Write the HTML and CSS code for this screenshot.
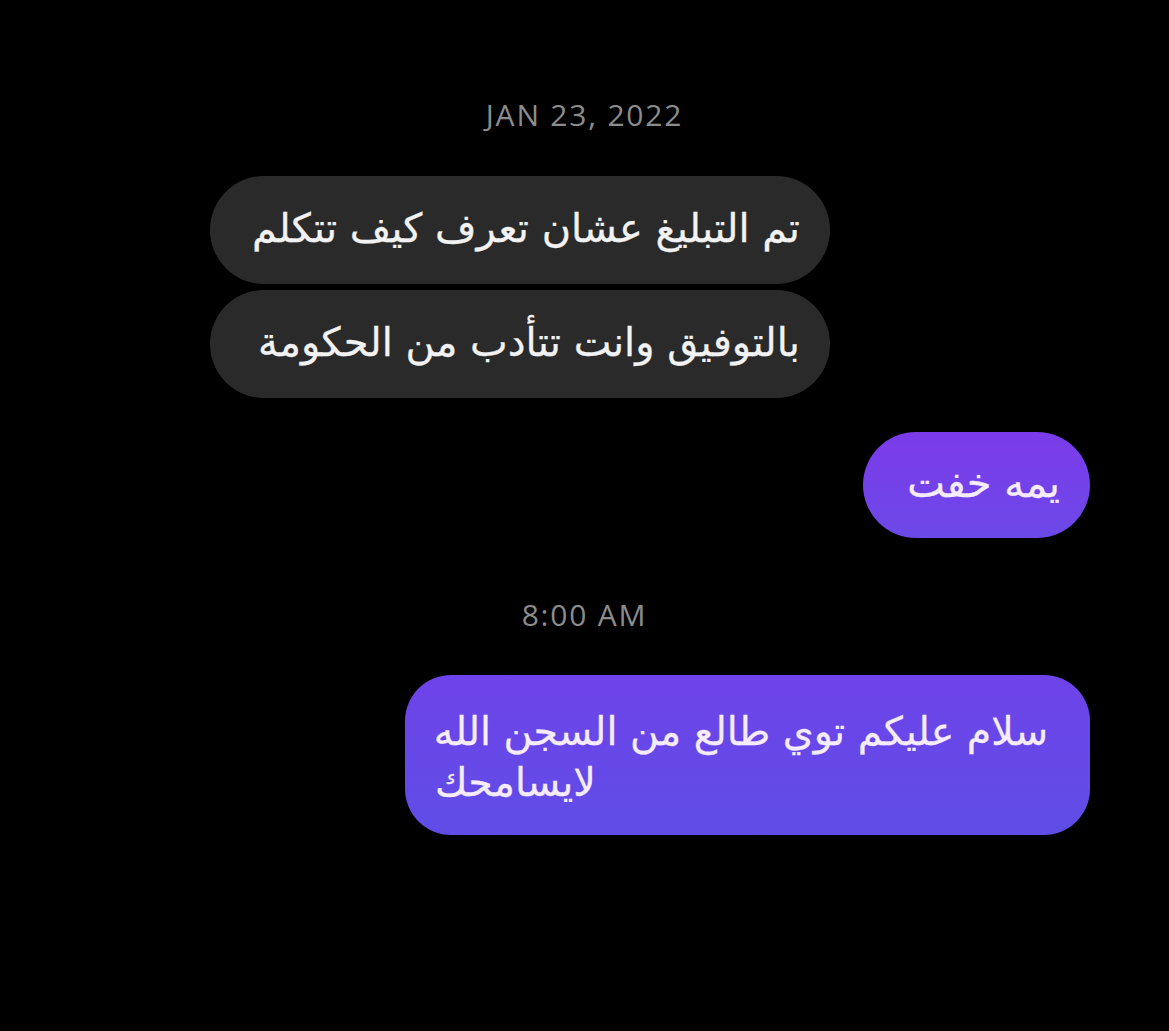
FILE: index.html
```html
<!DOCTYPE html>
<html lang="ar">
<head>
    <meta charset="UTF-8">
    <meta name="viewport" content="width=device-width, initial-scale=1.0">
    <title>Chat</title>
    <link rel="stylesheet" href="styles.css">
</head>
<body>
    <div class="chat">
        <div class="stamp date">JAN 23, 2022</div>
        <div class="msg them first" dir="rtl">تم التبليغ عشان تعرف كيف تتكلم</div>
        <div class="msg them last" dir="rtl">بالتوفيق وانت تتأدب من الحكومة</div>
        <div class="msg me short" dir="rtl">يمه خفت</div>
        <div class="stamp time">8:00 AM</div>
        <div class="msg me long" dir="rtl">سلام عليكم توي طالع من السجن الله<br>لايسامحك</div>
    </div>
</body>
</html>
```

FILE: styles.css
```css
*{
    padding: 0;
    margin: 0;
    box-sizing: border-box;
}
body{
    background-color: #000;
    width: 1169px;
    height: 1031px;
    overflow: hidden;
}
.chat{
    display: flex;
    flex-direction: column;
    padding-top: 97px;
}
.stamp{
    font-family: "Open Sans", "Liberation Sans", sans-serif;
    font-size: 30px;
    font-weight: 500;
    letter-spacing: 1.8px;
    color: #8c8c8c;
    text-align: center;
    width: 1169px;
    line-height: 36px;
}
.date{
    margin-bottom: 43px;
}
.time{
    margin-top: 59px;
    margin-bottom: 42px;
}
.msg{
    font-family: "DejaVu Sans", sans-serif;
    font-size: 40px;
    color: #f2f2f2;
    -webkit-text-stroke: 0.3px;
    border-radius: 54px;
    padding: 0 30px;
}
.them{
    background-color: #2a2a2a;
    align-self: flex-start;
    margin-left: 210px;
    width: 620px;
    height: 108px;
    line-height: 104px;
}
.them.last{
    margin-top: 6px;
}
.me{
    align-self: flex-end;
    margin-right: 79px;
    color: #f6ecff;
}
.short{
    margin-top: 34px;
    width: 227px;
    height: 106px;
    line-height: 102px;
    background: linear-gradient(180deg, #7b3bea, #6c48e8);
}
.long{
    width: 685px;
    height: 160px;
    padding: 31px 42px 0 30px;
    font-size: 39.5px;
    line-height: 51px;
    white-space: nowrap;
    text-align: left;
    border-radius: 46px;
    background: linear-gradient(180deg, #6e43e9, #5f4de6);
}
```
